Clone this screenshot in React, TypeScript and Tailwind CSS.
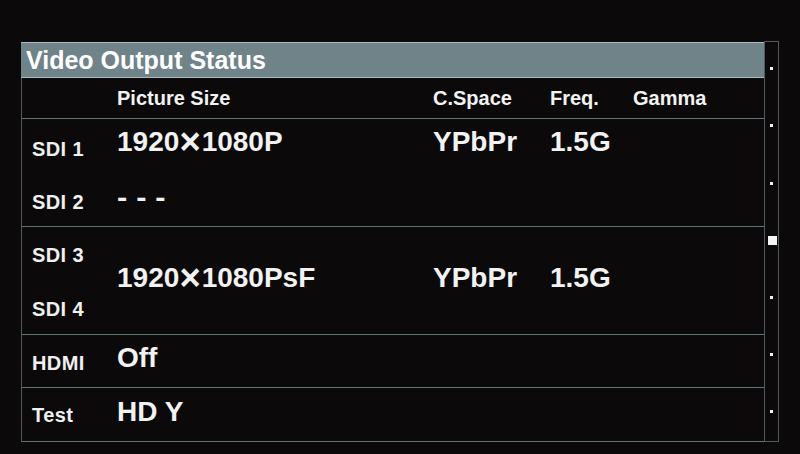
import React from "react";

const font = { fontFamily: '"Liberation Sans", Arial, sans-serif' };

function Times() {
  return <span className="inline-block mx-[3px] scale-[1.3]">×</span>;
}

function Label({ children, mt }: { children: React.ReactNode; mt: string }) {
  return (
    <div className={`text-[20px] leading-none font-bold tracking-[0.4px] text-[#f0f0f0] ${mt}`}>{children}</div>
  );
}

export default function App() {
  const dots = [
    { top: "mt-[25px]", big: false },
    { top: "mt-[54px]", big: false },
    { top: "mt-[55px]", big: false },
    { top: "mt-[51px]", big: true },
    { top: "mt-[51px]", big: false },
    { top: "mt-[54px]", big: false },
    { top: "mt-[54px]", big: false },
  ];
  return (
    <div
      className="w-[800px] h-[454px] overflow-hidden bg-[#0b0909] pt-[41px] pl-[21px] text-[#f2f2f2]"
      style={font}
    >
      <div className="flex">
        {/* table */}
        <div className="mt-[1px] w-[743px] border-l border-[#4e5a5e] flex flex-col">
          {/* title */}
          <div className="h-[36px] -ml-px bg-[#6f8389] border-t border-b border-[#a6bac1] flex items-center pl-[5px]">
            <span className="text-[25px] leading-none font-bold text-white">Video Output Status</span>
          </div>
          {/* header */}
          <div className="h-[41px] border-b border-[#5f7378] flex items-center text-[20px] leading-none font-bold">
            <div className="w-[94px]" />
            <div className="w-[317px] pl-[1px]">Picture Size</div>
            <div className="w-[117px]">C.Space</div>
            <div className="w-[83px]">Freq.</div>
            <div>Gamma</div>
          </div>
          {/* group 1 */}
          <div className="h-[108px] border-b border-[#5f7378] flex flex-col">
            <div className="h-[54px] flex items-start">
              <div className="w-[94px] pl-[10px]">
                <Label mt="mt-[20px]">SDI 1</Label>
              </div>
              <div className="mt-[9px] flex text-[28px] leading-none font-bold">
                <div className="w-[317px] pl-[1px]">
                  1920<Times />1080P
                </div>
                <div className="w-[117px]">YPbPr</div>
                <div className="w-[83px]">1.5G</div>
              </div>
            </div>
            <div className="flex items-start">
              <div className="w-[94px] pl-[10px]">
                <Label mt="mt-[19px]">SDI 2</Label>
              </div>
              <div className="mt-[11px] text-[28px] leading-none font-bold tracking-[8px] pl-[1px] scale-x-[1.1] origin-left">---</div>
            </div>
          </div>
          {/* group 2 */}
          <div className="h-[108px] border-b border-[#5f7378] flex items-start">
            <div className="w-[94px] pl-[10px] flex flex-col">
              <Label mt="mt-[18px]">SDI 3</Label>
              <Label mt="mt-[34px]">SDI 4</Label>
            </div>
            <div className="mt-[37px] flex text-[28px] leading-none font-bold">
              <div className="w-[317px] pl-[1px]">
                1920<Times />1080PsF
              </div>
              <div className="w-[117px]">YPbPr</div>
              <div className="w-[83px]">1.5G</div>
            </div>
          </div>
          {/* HDMI */}
          <div className="h-[53px] border-b border-[#5f7378] flex items-start">
            <div className="w-[94px] pl-[10px]">
              <Label mt="mt-[18px]">HDMI</Label>
            </div>
            <div className="mt-[9px] text-[28px] leading-none font-bold pl-[1px]">Off</div>
          </div>
          {/* Test */}
          <div className="h-[54px] border-b border-[#5f7378] flex items-start">
            <div className="w-[94px] pl-[10px]">
              <Label mt="mt-[17px]">Test</Label>
            </div>
            <div className="mt-[10px] text-[28px] leading-none font-bold pl-[1px]">HD Y</div>
          </div>
        </div>
        {/* scroll column */}
        <div className="w-[15px] h-[401px] border border-[#4e5a5e] flex flex-col items-center">
          {dots.map((d, i) =>
            d.big ? (
              <div key={i} className={`${d.top} w-[9px] h-[9px] bg-[#f4f4f4] ml-px`} />
            ) : (
              <div key={i} className={`${d.top} w-[3px] h-[3px] bg-[#f4f4f4]`} />
            )
          )}
        </div>
      </div>
    </div>
  );
}
